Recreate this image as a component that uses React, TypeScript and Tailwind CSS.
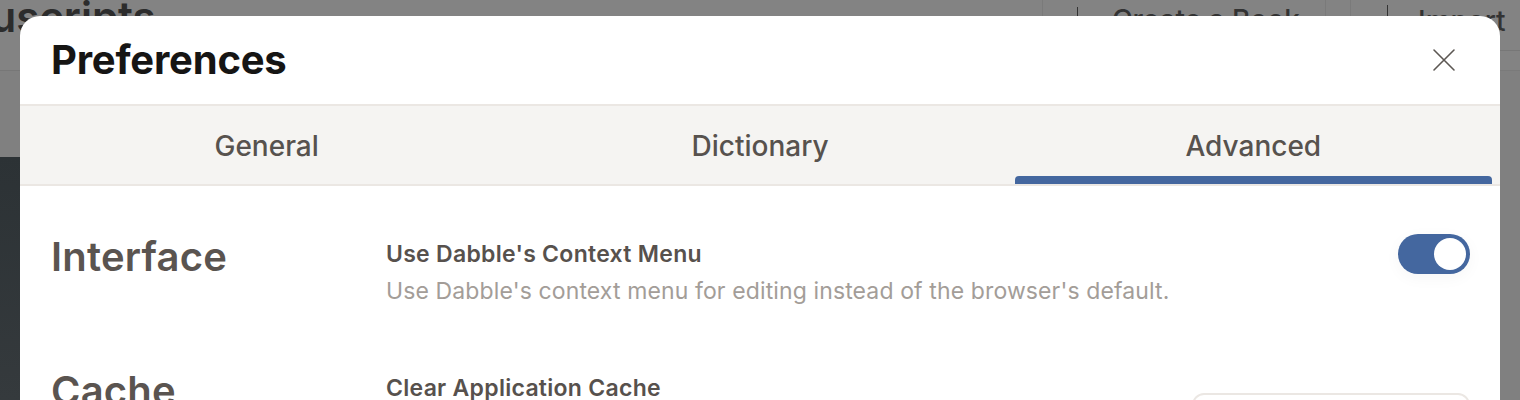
import React from "react";

const font = { fontFamily: "Inter, 'Noto Sans', sans-serif" };

function Toggle({ on }: { on: boolean }) {
  return (
    <div
      className={`flex h-[40px] w-[72px] shrink-0 items-center rounded-full p-[4px] shadow-[0_4px_16px_rgba(0,0,0,0.04)] ${
        on ? "justify-end bg-[#44679f]" : "justify-start bg-[#d8d4d0]"
      }`}
    >
      <div className="h-[32px] w-[32px] rounded-full bg-white" />
    </div>
  );
}

function Backdrop() {
  return (
    <>
      {/* app behind the dialog, dimmed */}
      <div className="absolute left-0 top-0 h-[70px] w-full bg-[#838383]" />
      <div className="absolute left-[-98px] top-[-8px] text-[42px] font-semibold leading-[50px] text-[#2c2c2c]" style={font}>
        Manuscripts
      </div>
      <div className="absolute left-0 top-[70px] h-[1px] w-[20px] bg-[#777]" />
      <div className="absolute left-0 top-[157px] h-[243px] w-[20px] bg-gradient-to-b from-[#2c3235] to-[#353a3d]" />
      <div className="absolute left-[1042px] top-0 h-[16px] w-[1px] bg-[#7a7a7a]" />
      <div className="absolute left-[1325px] top-0 h-[16px] w-[1px] bg-[#7a7a7a]" />
      <div className="absolute left-[1350px] top-0 h-[16px] w-[1px] bg-[#7a7a7a]" />
      <div className="absolute left-[1077px] top-[7px] h-[9px] w-[1px] bg-[#333]" />
      <div className="absolute left-[1387px] top-[5px] h-[11px] w-[1px] bg-[#333]" />
      <div className="absolute left-[1112px] top-[3px] text-[28px] font-medium leading-[34px] text-[#333]" style={font}>
        Create a Book
      </div>
      <div className="absolute left-[1418px] top-[4px] text-[28px] font-medium leading-[34px] text-[#333]" style={font}>
        Import Book
      </div>
      <div className="absolute left-[1500px] top-[50px] h-[1px] w-[20px] bg-[#777]" />
      <div className="absolute left-[1500px] top-[70px] h-[1px] w-[20px] bg-[#7a7a7a]" />
    </>
  );
}

export default function App() {
  const tabs = ["General", "Dictionary", "Advanced"];
  const active = "Advanced";

  return (
    <div className="relative h-[400px] w-[1520px] overflow-hidden bg-[#808080]" style={font}>
      <Backdrop />

      <div className="absolute left-[20px] top-[16px] w-[1480px] overflow-hidden rounded-[20px] bg-white">
        {/* Header */}
        <div className="flex h-[88px] items-center justify-between pl-[31px] pr-[43px]">
          <h1 className="text-[40px] font-bold tracking-[-0.2px] text-[#161514]">Preferences</h1>
          <button className="flex h-[26px] w-[26px] items-center justify-center text-[#5c5753]">
            <svg width="24" height="24" viewBox="0 0 24 24" fill="none" stroke="currentColor" strokeWidth="1.6" strokeLinecap="round">
              <path d="M2 2L22 22M22 2L2 22" />
            </svg>
          </button>
        </div>

        {/* Tabs */}
        <div className="grid h-[82px] grid-cols-3 border-y-2 border-y-[#ebe7e3] bg-[#f5f4f2]">
          {tabs.map((t) => (
            <div key={t} className="flex flex-col px-[8px]">
              <div className="flex flex-1 items-center justify-center pt-[9px] text-[28px] font-medium text-[#57524e]">
                {t}
              </div>
              <div className={`h-[8px] rounded-t-[4px] ${t === active ? "bg-[#44679f]" : ""}`} />
            </div>
          ))}
        </div>

        {/* Content */}
        <div className="flex flex-col gap-[62px] pl-[31px] pr-[30px] pt-[47px]">
          <div className="flex items-start">
            <h2 className="w-[335px] shrink-0 text-[40px] font-semibold leading-[48px] tracking-[0.2px] text-[#5a5450]">Interface</h2>
            <div className="flex flex-1 flex-col gap-[9px] pt-[7px]">
              <div className="text-[23px] font-semibold leading-[28px] tracking-[0.28px] text-[#57514d]">Use Dabble's Context Menu</div>
              <div className="text-[23px] leading-[28px] tracking-[0.12px] text-[#a39d98]">
                Use Dabble's context menu for editing instead of the browser's default.
              </div>
            </div>
            <div className="pt-[1px]">
              <Toggle on />
            </div>
          </div>

          <div className="flex items-start">
            <h2 className="w-[335px] shrink-0 text-[40px] font-semibold leading-[48px] tracking-[0.2px] text-[#5a5450]">Cache</h2>
            <div className="flex flex-1 flex-col gap-[9px] pt-[7px]">
              <div className="text-[23px] font-semibold leading-[28px] tracking-[0.28px] text-[#57514d]">Clear Application Cache</div>
              <div className="text-[23px] leading-[28px] tracking-[0.12px] text-[#a39d98]">
                Clears cached data stored by the application in this browser.
              </div>
            </div>
            <button className="mt-[26px] h-[48px] w-[278px] shrink-0 rounded-[12px] border-2 border-[#ebe7e3] text-[23px] font-medium text-[#57514d]">
              Clear Cache
            </button>
          </div>
        </div>
      </div>
    </div>
  );
}
